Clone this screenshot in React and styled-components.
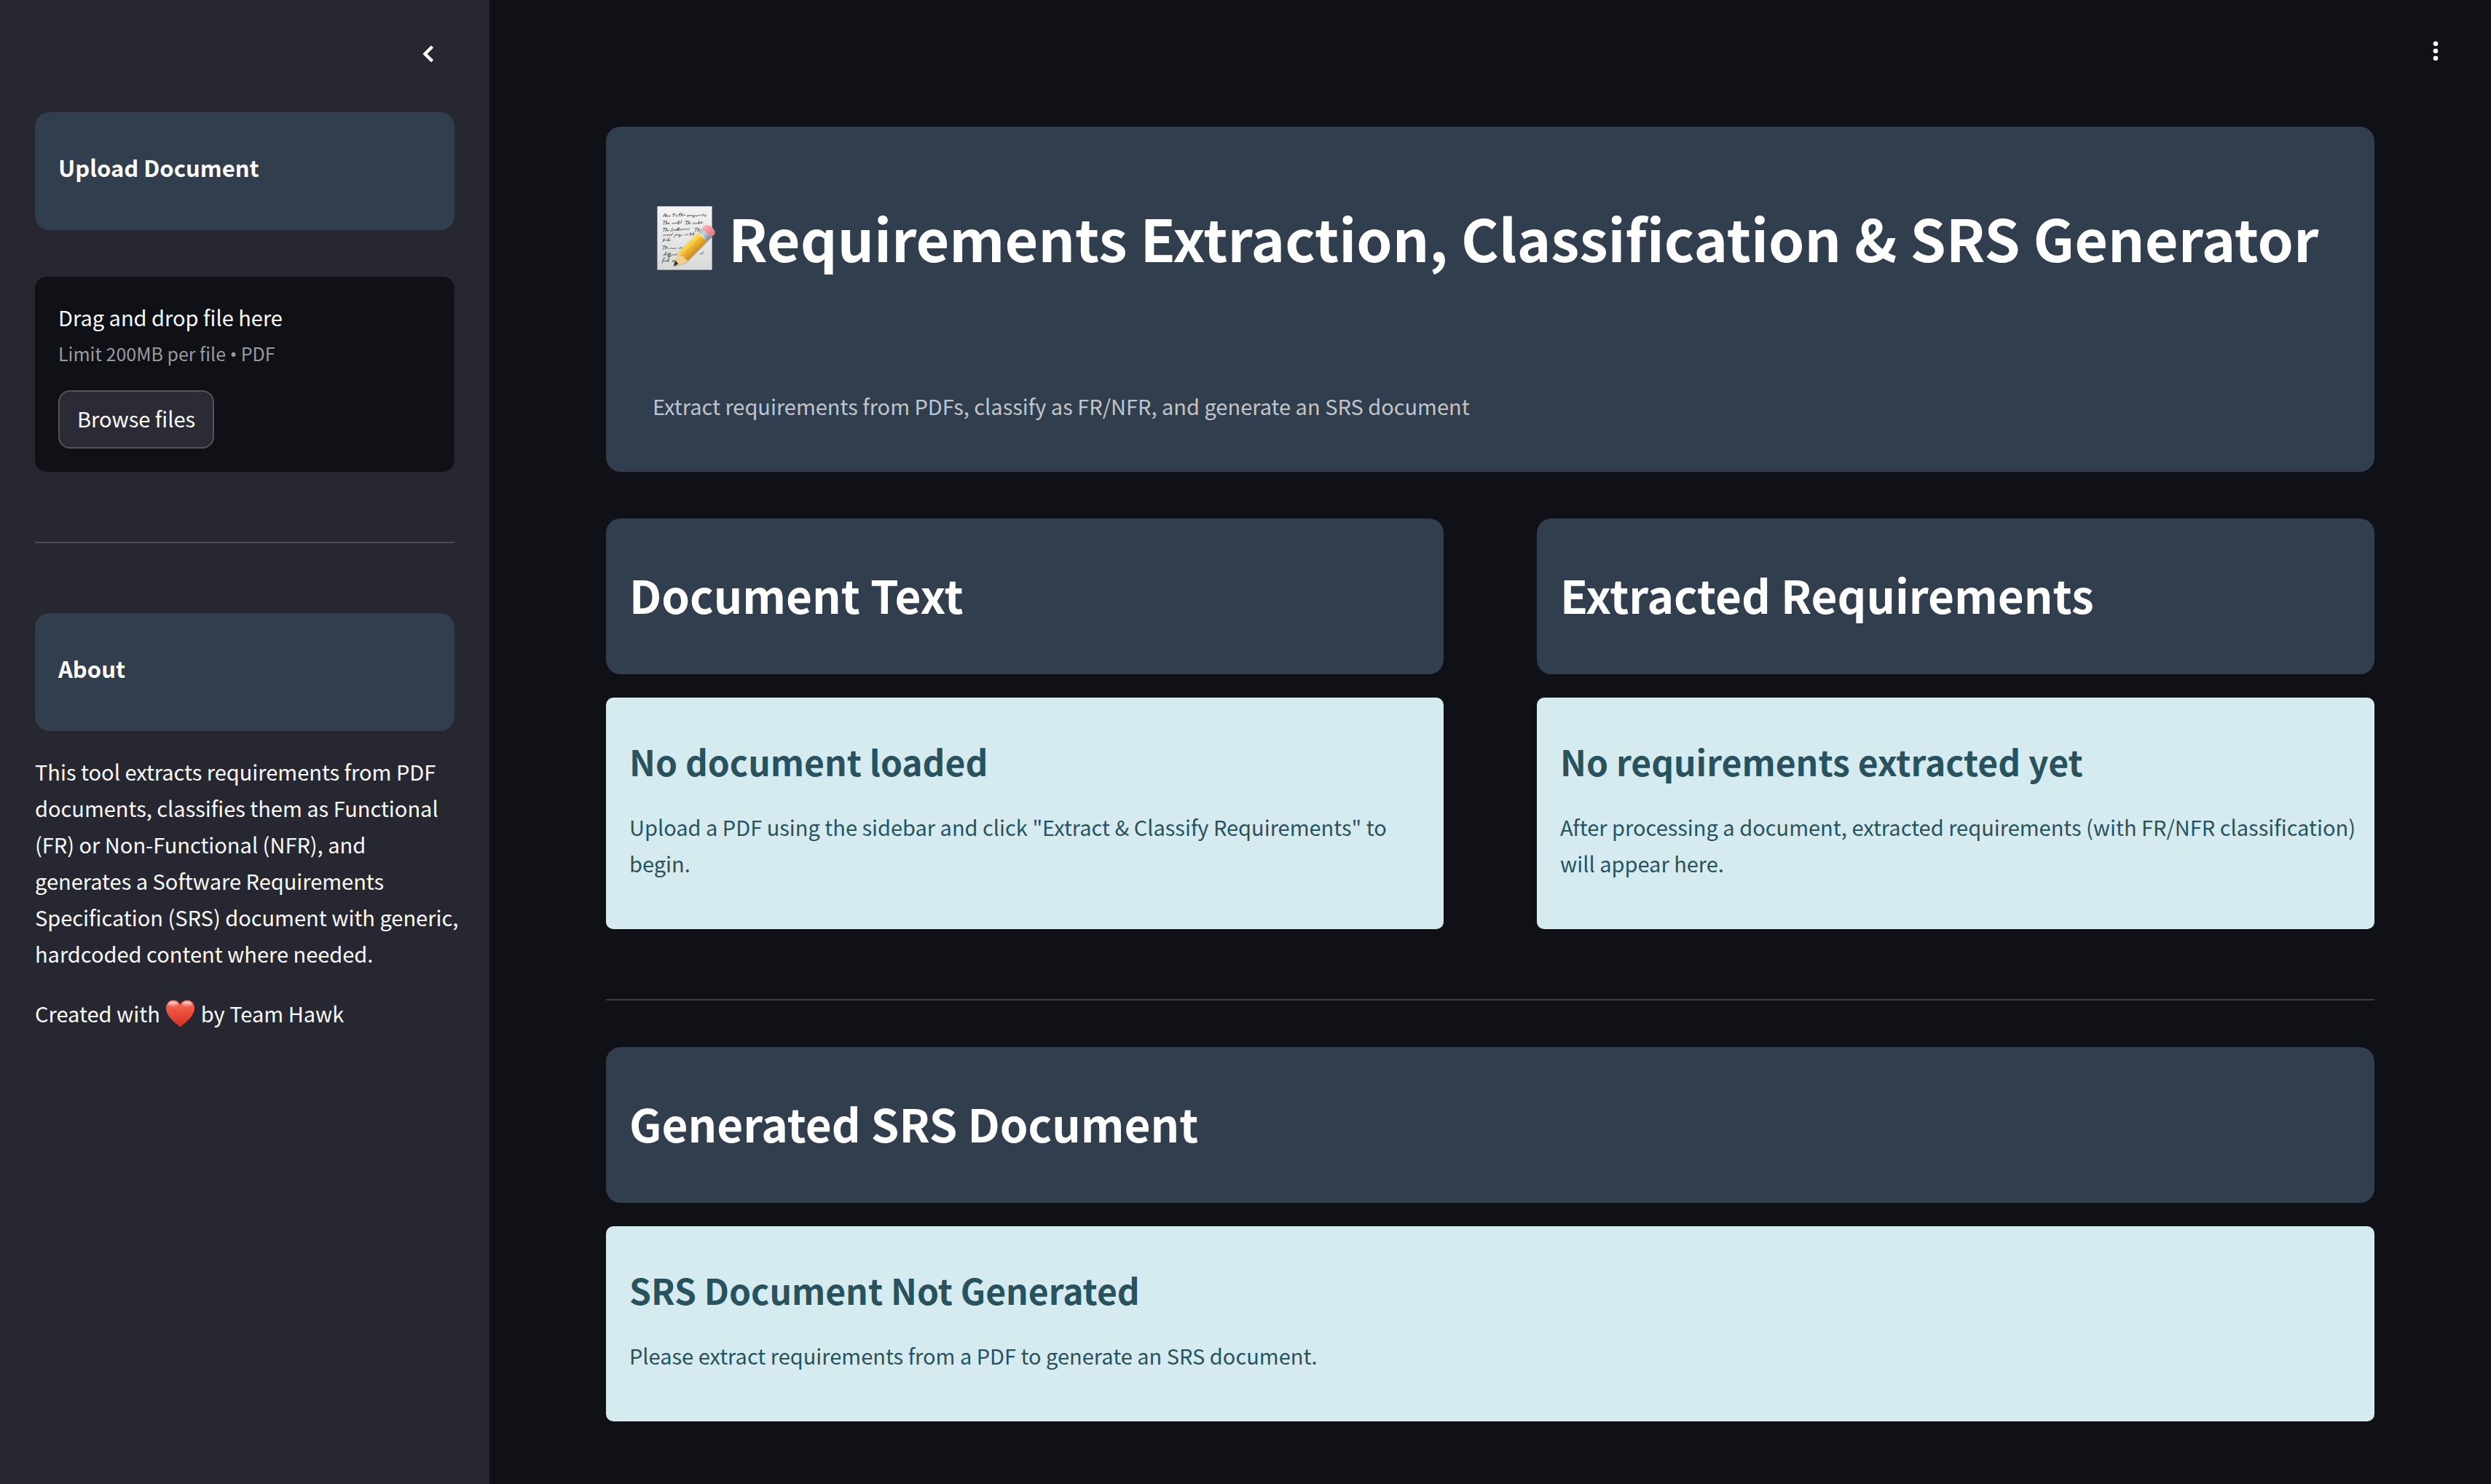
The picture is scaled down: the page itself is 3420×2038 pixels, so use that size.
import React, { useRef } from "react";
import styled, { createGlobalStyle } from "styled-components";

const color = {
  page: "#0f1116",
  sidebar: "#262730",
  card: "#313e4d",
  info: "#d6ebef",
  infoText: "#28535e",
  text: "#fafafa",
};

const GlobalStyle = createGlobalStyle`
  *, *::before, *::after { box-sizing: border-box; }
  body {
    margin: 0;
    background: ${color.page};
    color: ${color.text};
    font-family: "Noto Sans CJK SC", "Noto Sans", sans-serif;
    font-size: 29px;
    line-height: 50px;
  }
  h1, h2, h3, p { margin: 0; }
`;

const Layout = styled.div`
  display: flex;
  min-height: 100vh;
`;

const Sidebar = styled.aside`
  flex: 0 0 672px;
  background: ${color.sidebar};
  padding: 0 48px 48px;
`;

const SidebarHeader = styled.div`
  display: flex;
  justify-content: flex-end;
  padding: 46px 8px 52px;
`;

const IconButton = styled.button`
  display: grid;
  place-items: center;
  width: 56px;
  height: 56px;
  padding: 0;
  border: 0;
  border-radius: 16px;
  background: transparent;
  color: #ffffff;
  cursor: pointer;
`;

const SidebarCard = styled.div`
  padding: 54px 32px 64px;
  border-radius: 20px;
  background: ${color.card};
`;

const SidebarTitle = styled.h3`
  color: #ffffff;
  font-size: 31px;
  line-height: 44px;
  font-weight: 700;
`;

const Dropzone = styled.section`
  margin-top: 64px;
  padding: 30px 32px 32px;
  border-radius: 16px;
  background: ${color.page};
`;

const DropHint = styled.p`
  margin: 4px 0 30px;
  color: #9b9b9e;
  font-size: 25px;
  line-height: 42px;
`;

const Bullet = styled.span`
  font-family: "Noto Sans", sans-serif;
  line-height: 1;
`;

const BrowseButton = styled.button`
  display: block;
  height: 80px;
  padding: 0 24px 4px;
  border: 2px solid #53535a;
  border-radius: 16px;
  background: #2b2b36;
  color: ${color.text};
  font: inherit;
  cursor: pointer;
`;

const Divider = styled.hr`
  height: 2px;
  margin: ${(p) => p.$space};
  border: 0;
  background: ${(p) => p.$tone};
`;

const AboutText = styled.div`
  display: grid;
  gap: 32px;
  margin: 30px -8px 0 0;
`;

const Main = styled.main`
  flex: 1;
  min-width: 0;
`;

const Toolbar = styled.header`
  display: flex;
  justify-content: flex-end;
  padding: 42px 48px;
`;

const Content = styled.div`
  padding: 34px 160px 86px;
`;

const Hero = styled.section`
  padding: 99px 64px 66px;
  border-radius: 20px;
  background: ${color.card};
`;

const HeroTitle = styled.h1`
  color: #ffffff;
  font-size: 79px;
  line-height: 106px;
  font-weight: 700;
`;

const HeroText = styled.p`
  margin-top: 153px;
  color: #c1c5c9;
`;

const Columns = styled.div`
  display: grid;
  grid-template-columns: 1fr 1fr;
  gap: 128px;
  margin-top: 64px;
`;

const SectionCard = styled.div`
  padding: 61px 32px 67px;
  border-radius: 20px;
  background: ${color.card};
`;

const SectionTitle = styled.h2`
  color: #ffffff;
  font-size: 62px;
  line-height: 86px;
  font-weight: 600;
`;

const InfoBox = styled.div`
  margin-top: 32px;
  padding: 53px 24px 66px 32px;
  border-radius: 10px;
  background: ${color.info};
  color: ${color.infoText};
`;

const InfoTitle = styled.h3`
  margin-bottom: 31px;
  font-size: 48px;
  line-height: 68px;
  font-weight: 600;
`;

const MemoSvg = styled.svg`
  width: 86px;
  height: 92px;
  vertical-align: -12px;
`;

const HeartSvg = styled.svg`
  width: 43px;
  height: 40px;
  vertical-align: -8px;
`;

function Chevron() {
  return (
    <svg width="24" height="28" viewBox="0 0 24 28" fill="none" stroke="currentColor" strokeWidth="4.5" aria-hidden="true">
      <path d="M17.5 4 7.5 14l10 10" />
    </svg>
  );
}

function Dots() {
  return (
    <svg width="10" height="30" viewBox="0 0 10 30" fill="currentColor" aria-hidden="true">
      <circle cx="5" cy="5" r="3.3" />
      <circle cx="5" cy="15" r="3.3" />
      <circle cx="5" cy="25" r="3.3" />
    </svg>
  );
}

function Memo() {
  return (
    <MemoSvg viewBox="48 60 258 276" overflow="visible" role="img" aria-label="Memo">
      <defs>
        <linearGradient id="paper" x1="0" y1="0" x2="0" y2="1">
          <stop offset="0" stopColor="#f4f4f4" />
          <stop offset="1" stopColor="#d9d9d9" />
        </linearGradient>
        <linearGradient id="wood" gradientUnits="userSpaceOnUse" x1="180" y1="216" x2="220" y2="260">
          <stop offset="0" stopColor="#ffe06a" />
          <stop offset="0.45" stopColor="#f8cf45" />
          <stop offset="0.5" stopColor="#f1bd36" />
          <stop offset="1" stopColor="#cf9422" />
        </linearGradient>
        <linearGradient id="metal" gradientUnits="userSpaceOnUse" x1="238" y1="172" x2="280" y2="206">
          <stop offset="0" stopColor="#a9bed0" />
          <stop offset="0.4" stopColor="#dbe6ee" />
          <stop offset="1" stopColor="#74879a" />
        </linearGradient>
        <linearGradient id="rubber" gradientUnits="userSpaceOnUse" x1="256" y1="150" x2="298" y2="192">
          <stop offset="0" stopColor="#ffb8ba" />
          <stop offset="1" stopColor="#d9777f" />
        </linearGradient>
      </defs>
      <rect x="68" y="70" width="224" height="261" fill="url(#paper)" stroke="#b5b8bc" strokeWidth="2" />
      <g fill="none" stroke="#55585c" strokeWidth="2.6" strokeLinecap="round" strokeLinejoin="round">
        <path d="M92 113l6-13M100 113l5-13M94 107h9q3-2 4 1t-4 4q3 2 7-3l3 3 4-4-1 4 5-4M133 112l5-14M130 103h11M143 110q4-6 6-2t-4 3M156 111l6-14M154 103h9M164 111l6-13-3 9q4-4 4 2l5-2q5-6 3-1 3 3 5-1M190 110q4-7 6-2t-5 3l8-4q5-3 4 3l7-4 2 4 8-3-6 10 10-9 4 3 7-4M232 110q4-6 7-3t5-1 6 2 6-3 6 3 6-3" />
        <path d="M91 131h12M98 131l-5 14M101 145l6-14-3 9q4-4 4 3l6-4q4-4-1 1t5 1M129 143l4-5 2 4 5-5 2 5 6-3q4-4 1 2l6-11q5-6-2 15l8-9 3 4 4-12M182 131h12M190 131l-5 14M192 145l6-14-2 9q4-4 4 3l7-5M215 144l4-7 4 6 6-4 5 3 6-12-3 12 7-2 5-8-2 8 8-3" />
        <path d="M91 160h12M98 160l-5 14M101 174l6-14-2 9q4-4 4 3l7-4M124 173l6-14M130 172l5-7 2 5 7-5 1 5 7-10-3 11 8-14-2 13 7-6 3 5 5-7 4 6 7-6 3 5 7-5 3 4 7-5M221 160h13M229 160l-5 14M233 174l6-14-2 10 9-2" />
        <path d="M91 192l4-6 4 5 5-5 4 5 5-6 3 6 7-5 2 5 7-11M137 198l6-13q6-1 3 5l7-4 2 4 6-5-4 13 9-10 5 2M181 190l4-6 4 5 5-5M205 178l-3 13M200 184h9M211 191l6-13-2 9 6-3" />
        <path d="M90 216l6-14-3 11q5-8 7-2l6-3 3 4 7-12-4 13 8-3" />
        <path d="M89 234h13M97 234l-5 14M100 248l6-14-2 9 6-2 5 3M121 246q4-8 7-3l5 3 5-5 3 4 6-4M157 245l5-7 3 6 6-4 4 2" />
        <path d="M92 273q5-9 7-5l5-11-5 15 8-5 3 5 5-9q5-10-4 18l10-17q4-6-5 16l10-7 5-6 4 5 6-5 2 4 7-5M243 268l6-5 3 4 7-11" />
        <path d="M87 305l8-23q4-3 2 3M88 294h9l3 4 5-6 3 6 7-14-2 15M129 297q4-9 7-4t-5 5M140 306l7-22" />
      </g>
      <path d="M144 318 304 170l3 14-120 120z" fill="#2a2f36" opacity="0.35" />
      <path d="m233 179 38 34-78 82-16 7-38 14-3-14 12-24 3-17z" fill="url(#wood)" />
      <path d="m151 261 9 3 4 11 13 2 5 11 12 5-8 9-50 16-1-6 12-34z" fill="#efd08f" />
      <path d="m141 292 13 15-20 12z" fill="#33343a" />
      <path d="m235 177 14-15 39 34-16 16z" fill="url(#metal)" />
      <path d="m241 171 38 34M246 166l38 34" stroke="#7e90a3" strokeWidth="2" />
      <path d="m249 162 8-10c8-8 22-6 35 5 14 12 18 24 8 32l-12 8z" fill="url(#rubber)" />
    </MemoSvg>
  );
}

function Heart() {
  return (
    <HeartSvg viewBox="0 0 43 40" role="img" aria-label="love">
      <defs>
        <linearGradient id="heart" x1="0" y1="0" x2="0" y2="1">
          <stop offset="0" stopColor="#f4715f" />
          <stop offset="0.5" stopColor="#ea4c3b" />
          <stop offset="1" stopColor="#d02f20" />
        </linearGradient>
        <linearGradient id="shine" x1="0" y1="0" x2="0" y2="1">
          <stop offset="0" stopColor="#ffffff" stopOpacity="0.75" />
          <stop offset="1" stopColor="#ffffff" stopOpacity="0" />
        </linearGradient>
      </defs>
      <path d="M21.5 38.5C15 33 2 24 2 12.5 2 6 6.5 1.5 12 1.5c4.5 0 7.8 2.5 9.5 6.3C23.2 4 26.5 1.5 31 1.5c5.5 0 10 4.500 10 11C41 24 28 33 21.500 38.500z" fill="url(#heart)" />
      <ellipse cx="11.5" cy="7" rx="6.5" ry="4" fill="url(#shine)" />
      <ellipse cx="31" cy="7" rx="6.5" ry="4" fill="url(#shine)" />
    </HeartSvg>
  );
}

function Section({ title, infoTitle, children }) {
  return (
    <section>
      <SectionCard>
        <SectionTitle>{title}</SectionTitle>
      </SectionCard>
      <InfoBox>
        <InfoTitle>{infoTitle}</InfoTitle>
        <p>{children}</p>
      </InfoBox>
    </section>
  );
}

export default function App() {
  const fileInput = useRef(null);
  return (
    <>
      <GlobalStyle />
      <Layout>
        <Sidebar>
          <SidebarHeader>
            <IconButton type="button" aria-label="Collapse sidebar">
              <Chevron />
            </IconButton>
          </SidebarHeader>
          <SidebarCard>
            <SidebarTitle>Upload Document</SidebarTitle>
          </SidebarCard>
          <Dropzone>
            <p>Drag and drop file here</p>
            <DropHint>
              Limit 200MB per file <Bullet>•</Bullet> PDF
            </DropHint>
            <input ref={fileInput} type="file" accept=".pdf" aria-label="Upload a PDF" hidden />
            <BrowseButton type="button" onClick={() => fileInput.current.click()}>
              Browse files
            </BrowseButton>
          </Dropzone>
          <Divider $space="96px 0" $tone="#4c4d55" />
          <SidebarCard>
            <SidebarTitle>About</SidebarTitle>
          </SidebarCard>
          <AboutText>
            <p>
              This tool extracts requirements from PDF documents, classifies them as Functional (FR) or
              Non-Functional (NFR), and generates a Software Requirements Specification (SRS) document with
              generic, hardcoded content where needed.
            </p>
            <p>
              Created with <Heart /> by Team Hawk
            </p>
          </AboutText>
        </Sidebar>
        <Main>
          <Toolbar>
            <IconButton type="button" aria-label="Main menu">
              <Dots />
            </IconButton>
          </Toolbar>
          <Content>
            <Hero>
              <HeroTitle>
                <Memo /> Requirements Extraction, Classification &amp; SRS Generator
              </HeroTitle>
              <HeroText>Extract requirements from PDFs, classify as FR/NFR, and generate an SRS document</HeroText>
            </Hero>
            <Columns>
              <Section title="Document Text" infoTitle="No document loaded">
                Upload a PDF using the sidebar and click "Extract &amp; Classify Requirements" to begin.
              </Section>
              <Section title="Extracted Requirements" infoTitle="No requirements extracted yet">
                After processing a document, extracted requirements (with FR/NFR classification) will appear here.
              </Section>
            </Columns>
            <Divider $space="96px 0 64px" $tone="#3c3d41" />
            <Section title="Generated SRS Document" infoTitle="SRS Document Not Generated">
              Please extract requirements from a PDF to generate an SRS document.
            </Section>
          </Content>
        </Main>
      </Layout>
    </>
  );
}
